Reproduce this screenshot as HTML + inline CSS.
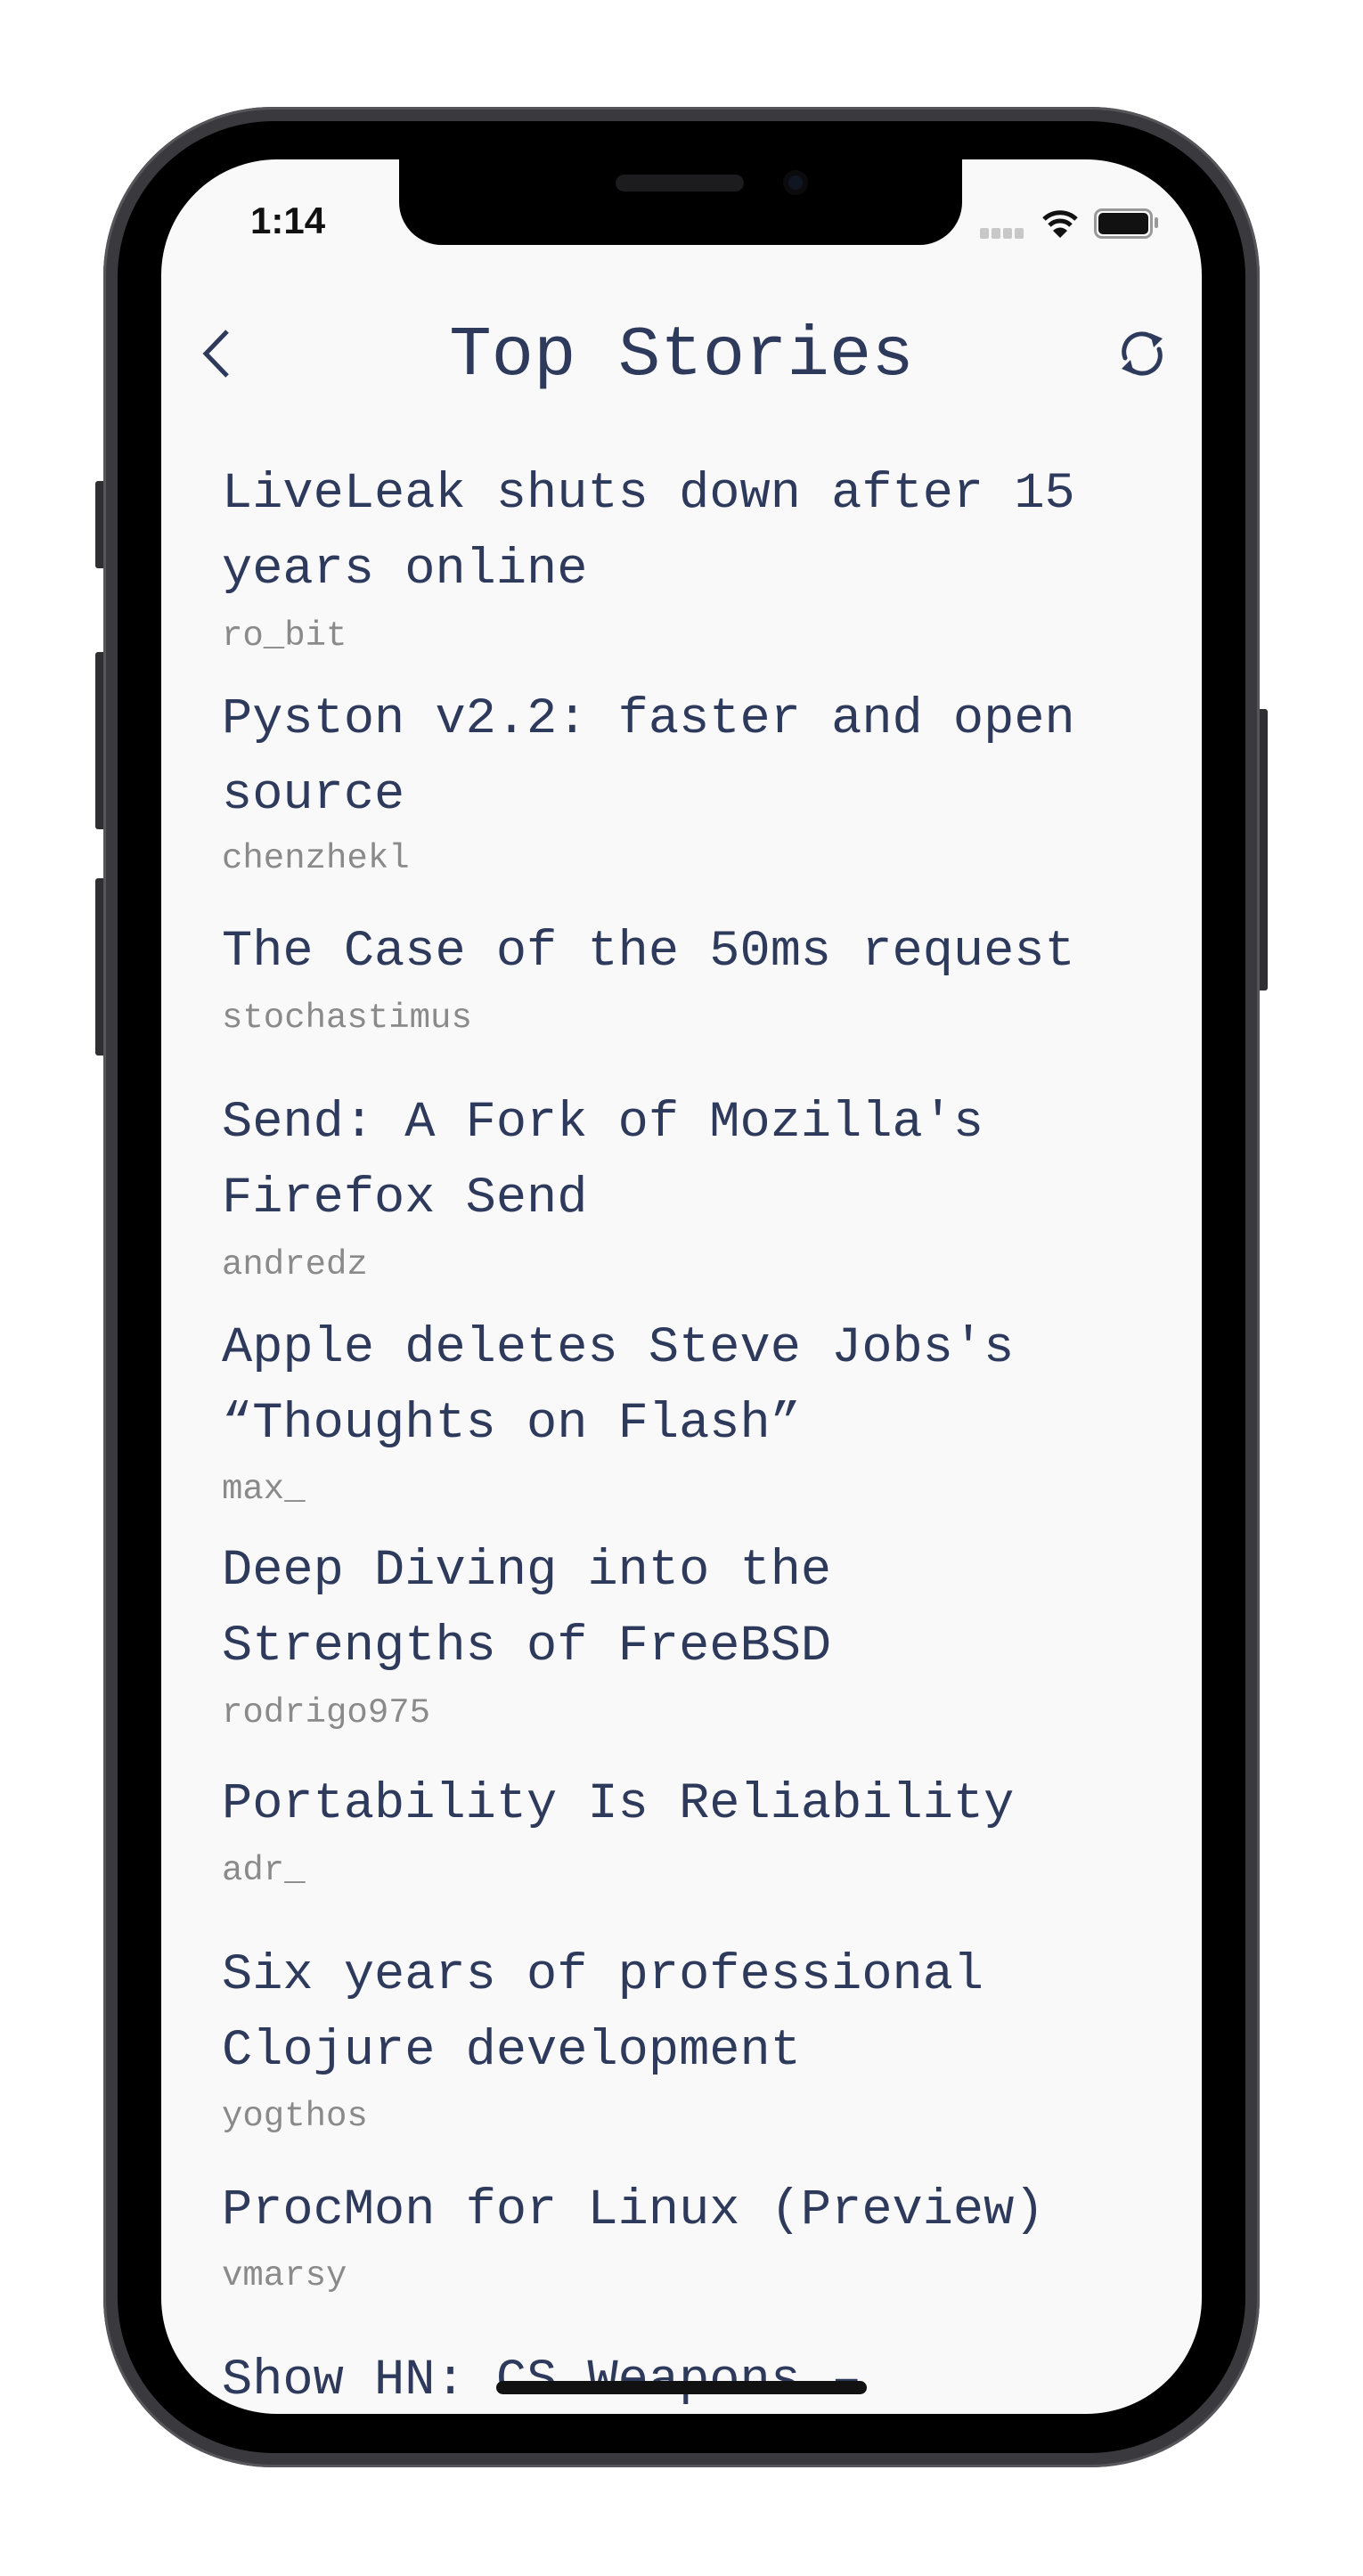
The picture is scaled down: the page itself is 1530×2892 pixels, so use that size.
<!DOCTYPE html>
<html><head><meta charset="utf-8"><style>
html,body{margin:0;padding:0;background:#fff;}
body{width:1530px;height:2892px;position:relative;overflow:hidden;font-family:"Liberation Mono",monospace;}
.abs{position:absolute;}
.frame{left:116px;top:120px;width:1298px;height:2650px;border-radius:190px;background:#3a3a3e;box-shadow:inset 0 0 0 3px #55555a;}
.bezel{left:132px;top:136px;width:1266px;height:2618px;border-radius:175px;background:#000;}
.screen{left:181px;top:179px;width:1168px;height:2531px;border-radius:130px;background:#f9f9f9;overflow:hidden;}
.notch{left:267px;top:-10px;width:632px;height:106px;background:#000;border-radius:0 0 48px 48px;}
.btn{background:#2f2f33;border-radius:3px;}
.t{position:absolute;left:68px;height:90px;line-height:90px;font-size:57px;color:#2e3a5b;white-space:nowrap;}
.a{position:absolute;left:68px;height:50px;line-height:50px;font-size:39px;color:#8a8a8a;white-space:nowrap;}
.list{position:absolute;left:0;top:4px;width:1168px;height:2531px;}
</style></head><body>
<div class="abs btn" style="left:107px;top:540px;width:12px;height:98px"></div>
<div class="abs btn" style="left:107px;top:732px;width:12px;height:199px"></div>
<div class="abs btn" style="left:107px;top:986px;width:12px;height:199px"></div>
<div class="abs btn" style="left:1411px;top:796px;width:12px;height:316px"></div>
<div class="abs frame"></div>
<div class="abs bezel"></div>
<div class="abs screen">
  <div class="abs notch">
    <div class="abs" style="left:243px;top:27px;width:144px;height:19px;border-radius:10px;background:#1c1c1e;"></div>
    <div class="abs" style="left:431px;top:22px;width:28px;height:28px;border-radius:50%;background:#101522;box-shadow:inset 0 0 0 6px #0b0b0d;"></div>
  </div>
  <div class="abs" style="left:100px;top:45px;font-family:'Liberation Sans',sans-serif;font-weight:bold;font-size:42px;color:#111;">1:14</div>
  <div class="abs" style="left:919px;top:76px;">
    <span style="display:inline-block;width:10px;height:12px;background:#c8c8c8;border-radius:2px;margin-right:3px"></span><span style="display:inline-block;width:10px;height:12px;background:#c8c8c8;border-radius:2px;margin-right:3px"></span><span style="display:inline-block;width:10px;height:12px;background:#c8c8c8;border-radius:2px;margin-right:3px"></span><span style="display:inline-block;width:10px;height:12px;background:#c8c8c8;border-radius:2px"></span>
  </div>
  <svg class="abs" style="left:989px;top:55px" width="40" height="34" viewBox="0 0 40 34"><path d="M2 12 A26 26 0 0 1 38 12" stroke="#111" stroke-width="5" fill="none"/><path d="M8 19 A17 17 0 0 1 32 19" stroke="#111" stroke-width="5" fill="none"/><path d="M20 33 L12 25 A11 11 0 0 1 28 25 Z" fill="#111"/></svg>
  <div class="abs" style="left:1047px;top:55px;width:60px;height:28px;border:3px solid #999;border-radius:9px;"></div>
  <div class="abs" style="left:1052px;top:60px;width:56px;height:24px;background:#111;border-radius:5px;"></div>
  <div class="abs" style="left:1115px;top:65px;width:4px;height:12px;background:#999;border-radius:2px;"></div>
  <svg class="abs" style="left:44px;top:190px" width="36" height="56" viewBox="0 0 36 56"><path d="M30 3 L6 28 L30 53" stroke="#2e3a5b" stroke-width="5" fill="none"/></svg>
  <div class="abs" style="left:0;width:1168px;top:170px;text-align:center;font-size:79px;line-height:100px;color:#2e3a5b;">Top Stories</div>
  <svg class="abs" style="left:1070px;top:191px" width="62" height="54" viewBox="0 0 62 54"><g stroke="#2e3a5b" stroke-width="5" fill="none" stroke-linecap="round"><path d="M12 32 A20 20 0 0 1 46 12"/><path d="M50 22 A20 20 0 0 1 16 42"/></g><path d="M40 4 L54 10 L44 20 Z" fill="#2e3a5b"/><path d="M22 50 L8 44 L18 34 Z" fill="#2e3a5b"/></svg>

  <div class="list">
  <div class="t" style="top:327px">LiveLeak shuts down after 15</div>
  <div class="t" style="top:412px">years online</div>
  <div class="a" style="top:506px">ro_bit</div>
  <div class="t" style="top:580px">Pyston v2.2: faster and open</div>
  <div class="t" style="top:665px">source</div>
  <div class="a" style="top:756px">chenzhekl</div>
  <div class="t" style="top:841px">The Case of the 50ms request</div>
  <div class="a" style="top:935px">stochastimus</div>
  <div class="t" style="top:1033px">Send: A Fork of Mozilla's</div>
  <div class="t" style="top:1118px">Firefox Send</div>
  <div class="a" style="top:1212px">andredz</div>
  <div class="t" style="top:1286px">Apple deletes Steve Jobs's</div>
  <div class="t" style="top:1371px">“Thoughts on Flash”</div>
  <div class="a" style="top:1464px">max_</div>
  <div class="t" style="top:1536px">Deep Diving into the</div>
  <div class="t" style="top:1621px">Strengths of FreeBSD</div>
  <div class="a" style="top:1715px">rodrigo975</div>
  <div class="t" style="top:1798px">Portability Is Reliability</div>
  <div class="a" style="top:1892px">adr_</div>
  <div class="t" style="top:1990px">Six years of professional</div>
  <div class="t" style="top:2075px">Clojure development</div>
  <div class="a" style="top:2168px">yogthos</div>
  <div class="t" style="top:2254px">ProcMon for Linux (Preview)</div>
  <div class="a" style="top:2347px">vmarsy</div>
  <div class="t" style="top:2445px">Show HN: CS Weapons –</div>
  </div>
  <div class="abs" style="left:376px;top:2494px;width:416px;height:15px;border-radius:8px;background:#111;"></div>
</div>
</body></html>
